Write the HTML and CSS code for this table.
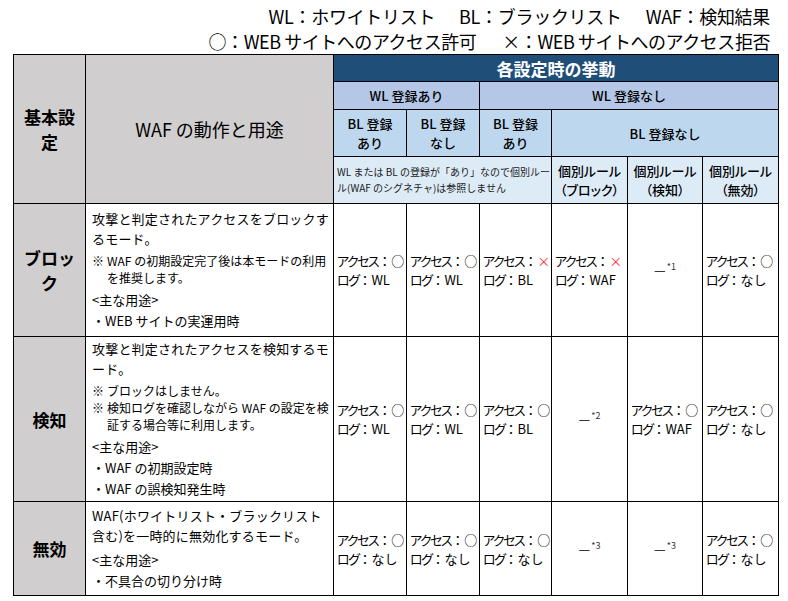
FILE: index.html
```html
<!DOCTYPE html>
<html lang="ja">
<head>
<meta charset="utf-8">
<title>WAF 設定</title>
<link rel="stylesheet" href="styles.css">
</head>
<body>
<div class="legend">
  <p class="legend-line l1">WL：ホワイトリスト<span class="sp"></span>BL：ブラックリスト<span class="sp"></span>WAF：検知結果</p>
  <p class="legend-line l2">○：WEB サイトへのアクセス許可<span class="sp sp2"></span>×：WEB サイトへのアクセス拒否</p>
</div>
<table class="grid">
  <colgroup>
    <col class="c-mode"><col class="c-desc"><col class="c-a"><col class="c-b"><col class="c-c"><col class="c-d"><col class="c-e"><col class="c-f">
  </colgroup>
  <tr class="r-title">
    <th rowspan="4" class="h-gray h-mode">基本設<br>定</th>
    <th rowspan="4" class="h-gray h-desc">WAF の動作と用途</th>
    <th colspan="6" class="h-dark">各設定時の挙動</th>
  </tr>
  <tr class="r-wl">
    <th colspan="2" class="h-wl">WL 登録あり</th>
    <th colspan="4" class="h-wl">WL 登録なし</th>
  </tr>
  <tr class="r-bl">
    <th class="h-bl">BL 登録<br>あり</th>
    <th class="h-bl">BL 登録<br>なし</th>
    <th class="h-bl">BL 登録<br>あり</th>
    <th colspan="3" class="h-bl">BL 登録なし</th>
  </tr>
  <tr class="r-rule">
    <td colspan="3" class="h-note">WL または BL の登録が「あり」なので個別ルー<br>ル(WAF のシグネチャ)は参照しません</td>
    <th class="h-rule">個別ルール<br>（ブロック）</th>
    <th class="h-rule">個別ルール<br>（検知）</th>
    <th class="h-rule">個別ルール<br>（無効）</th>
  </tr>
  <tr class="r-block">
    <th class="mode">ブロッ<br>ク</th>
    <td class="desc">
      <p class="lead">攻撃と判定されたアクセスをブロックす<br>るモード。</p>
      <div class="notes">
        <p class="note"><span class="kome">※</span>WAF の初期設定完了後は本モードの利用<br>を推奨します。</p>
      </div>
      <p class="use">&lt;主な用途&gt;<br>・WEB サイトの実運用時</p>
    </td>
    <td class="val"><span class="k">アクセス</span>：○<br><span class="k">ログ</span>：WL</td>
    <td class="val"><span class="k">アクセス</span>：○<br><span class="k">ログ</span>：WL</td>
    <td class="val"><span class="k">アクセス</span>：<span class="deny">×</span><br><span class="k">ログ</span>：BL</td>
    <td class="val"><span class="k">アクセス</span>：<span class="deny">×</span><br><span class="k">ログ</span>：WAF</td>
    <td class="dash">—<sup>*1</sup></td>
    <td class="val"><span class="k">アクセス</span>：○<br><span class="k">ログ</span>：なし</td>
  </tr>
  <tr class="r-detect">
    <th class="mode">検知</th>
    <td class="desc">
      <p class="lead">攻撃と判定されたアクセスを検知するモ<br>ード。</p>
      <div class="notes">
        <p class="note"><span class="kome">※</span>ブロックはしません。</p>
        <p class="note"><span class="kome">※</span>検知ログを確認しながら WAF の設定を検<br>証する場合等に利用します。</p>
      </div>
      <p class="use">&lt;主な用途&gt;<br>・WAF の初期設定時<br>・WAF の誤検知発生時</p>
    </td>
    <td class="val"><span class="k">アクセス</span>：○<br><span class="k">ログ</span>：WL</td>
    <td class="val"><span class="k">アクセス</span>：○<br><span class="k">ログ</span>：WL</td>
    <td class="val"><span class="k">アクセス</span>：○<br><span class="k">ログ</span>：BL</td>
    <td class="dash">—<sup>*2</sup></td>
    <td class="val"><span class="k">アクセス</span>：○<br><span class="k">ログ</span>：WAF</td>
    <td class="val"><span class="k">アクセス</span>：○<br><span class="k">ログ</span>：なし</td>
  </tr>
  <tr class="r-off">
    <th class="mode">無効</th>
    <td class="desc">
      <p class="lead">WAF(ホワイトリスト・ブラックリスト<br>含む)を一時的に無効化するモード。</p>
      <p class="use">&lt;主な用途&gt;<br>・不具合の切り分け時</p>
    </td>
    <td class="val"><span class="k">アクセス</span>：○<br><span class="k">ログ</span>：なし</td>
    <td class="val"><span class="k">アクセス</span>：○<br><span class="k">ログ</span>：なし</td>
    <td class="val"><span class="k">アクセス</span>：○<br><span class="k">ログ</span>：なし</td>
    <td class="dash">—<sup>*3</sup></td>
    <td class="dash">—<sup>*3</sup></td>
    <td class="val"><span class="k">アクセス</span>：○<br><span class="k">ログ</span>：なし</td>
  </tr>
</table>
</body>
</html>
```

FILE: styles.css
```css
* { box-sizing: border-box; }
html, body { margin: 0; padding: 0; background: #fff; }
body {
  font-family: "Noto Sans CJK JP", "Noto Sans", sans-serif;
  color: #000;
  width: 788px;
}
.legend {
  display: flex;
  flex-direction: column;
  align-items: flex-end;
  padding: 4px 18px 0 0;
  height: 54px;
}
.legend-line {
  margin: 0;
  font-size: 18px;
  line-height: 25px;
  white-space: nowrap;
}
.l1 { letter-spacing: -0.3px; }
.l2 { letter-spacing: -0.45px; }
.sp { display: inline-block; width: 24px; }
.sp2 { width: 26px; }

.grid {
  margin-left: 13px;
  border-collapse: collapse;
  table-layout: fixed;
  width: 765px;
}
.c-mode { width: 72px; }
.c-desc { width: 248px; }
.c-a { width: 73px; }
.c-b { width: 73px; }
.c-c { width: 72px; }
.c-d { width: 76px; }
.c-e { width: 75px; }
.c-f { width: 76px; }

.grid th, .grid td {
  border: 1px solid #000;
  padding: 0;
  vertical-align: middle;
}
.r-title { height: 27px; }
.r-wl { height: 28px; }
.r-bl { height: 47px; }
.r-rule { height: 47px; }
.r-block { height: 133px; }
.r-detect { height: 165px; }
.r-off { height: 94px; }

.h-gray { background: #d0cece; }
.h-mode {
  font-size: 17px;
  line-height: 25px;
  font-weight: 700;
  padding: 0 6px;
}
.h-desc {
  font-size: 18px;
  font-weight: 400;
  border-right: 3px double #000;
}
.h-dark {
  background: #1f4e79;
  color: #fff;
  font-size: 17px;
  font-weight: 700;
  border-left: 3px double #000;
}
.h-wl {
  background: #b4c7e7;
  font-size: 13px;
  font-weight: 500;
}
.h-bl {
  background: #bdd7ee;
  font-size: 13px;
  font-weight: 500;
  line-height: 19px;
}
.grid .h-note {
  background: #ddebf7;
  font-size: 10px;
  line-height: 16px;
  color: #222;
  padding-left: 3px;
  text-align: left;
  white-space: nowrap;
}
.h-rule {
  background: #ddebf7;
  font-size: 13px;
  font-weight: 500;
  line-height: 19px;
  font-feature-settings: "palt";
}

.mode {
  background: #d0cece;
  font-size: 17px;
  line-height: 25px;
  font-weight: 700;
}
.desc {
  border-right: 3px double #000;
  white-space: nowrap;
}
.grid .desc { padding: 0 2px 0 6px; }
.desc p { margin: 0; }
.lead { font-size: 13px; line-height: 20px; letter-spacing: 0.2px; }
.notes { margin-top: 3px; }
.desc .note {
  font-size: 12px;
  line-height: 17px;
  padding-left: 15px;
  text-indent: -15px;
}
.kome { display: inline-block; width: 15px; text-indent: 0; }
.desc .use { font-size: 13px; line-height: 21px; margin-top: 3px; }

.val {
  font-size: 13px;
  line-height: 19px;
  white-space: nowrap;
}
.grid .val { padding-left: 3px; }
.k { font-feature-settings: "palt"; letter-spacing: -1.5px; }
.deny { color: #ff3333; }
.dash {
  text-align: center;
  font-size: 13px;
}
.dash sup {
  font-size: 9px;
  color: #333;
  margin-left: 1px;
}
```
